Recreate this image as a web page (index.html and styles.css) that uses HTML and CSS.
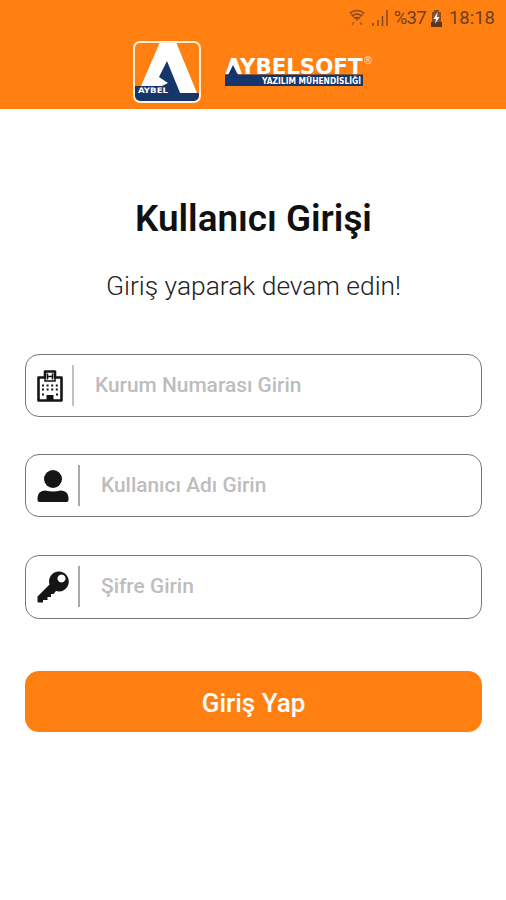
FILE: index.html
```html
<!DOCTYPE html>
<html lang="tr">
<head>
<meta charset="utf-8">
<title>Kullanıcı Girişi</title>
<link rel="stylesheet" href="styles.css">
</head>
<body>
<header class="header">
  <div class="status">
    <svg class="wifi" viewBox="0 0 16 18" width="16" height="18"><path d="M1 4Q8-1 15 4M3 7Q8 3 13 7M5.500 9.500Q8 7.500 10.500 9.500"/><path d="M1 4L8 11 15 4M8 9v3M5 13l-2 3M11 13l2 3" opacity=".6"/></svg>
    <svg class="signal" viewBox="0 0 18 18" width="18" height="18"><path d="M2 14v3M7 11v6M11.500 7v10M16 1v16"/></svg>
    <span class="percent">%37</span>
    <svg class="battery" viewBox="0 0 11 17" width="11" height="17"><path d="M3 0h5v2h2v15H1V2h2z" fill="#8b4c20"/><path d="M0 12h11v5H0z" fill="#57351f"/><path d="M6.500 2L2.500 9h2.700L4 14l4.500-7H6z" fill="#fff"/></svg>
    <span class="clock">18:18</span>
  </div>
  <div class="brand">
    <svg class="emblem" viewBox="0 0 70 64" width="70" height="64">
      <rect x="2" y="2" width="66" height="60" rx="6" fill="#ff7f11"/>
      <path d="M3 46H46V53H67v3q0 5-5 5H8q-5 0-5-5z" fill="#163568"/>
      <path d="M28 2H44L65 53H47L30 46H9z" fill="#fff"/>
      <path d="M35 21L27 37L36 43L30 46V54H48.500z" fill="#163568"/>
      <rect x="2" y="2" width="66" height="60" rx="6" fill="none" stroke="#fff1d8" stroke-width="2"/>
      <text x="6" y="52.800" textLength="30" lengthAdjust="spacingAndGlyphs" class="emblem-text">AYBEL</text>
    </svg>
    <svg class="wordmark" viewBox="0 0 150 36" width="150" height="36">
      <rect x="1" y="21.500" width="138" height="11.500" fill="#15366d"/>
      <text x="1.500" y="20.500" textLength="137" lengthAdjust="spacingAndGlyphs" class="wordmark-text">AYBELSOFT</text>
      <path d="M9 8l6 12H4z" fill="#fff"/><path d="M9 12l5 10H4z" fill="#15366d"/>
      <text x="38" y="31" textLength="99" lengthAdjust="spacingAndGlyphs" class="wordmark-sub">YAZILIM MÜHENDİSLİĞİ</text>
      <text x="139" y="11" class="registered">®</text>
    </svg>
  </div>
</header>
<main class="login">
  <h1 class="title">Kullanıcı Girişi</h1>
  <p class="subtitle">Giriş yaparak devam edin!</p>
  <form class="form">
    <label class="field field-org">
      <svg viewBox="0 0 26 32" width="26" height="32"><path d="M1.500 7.500H8V1.500H18V7.500H24.500V30.500H1.500z" fill="#fff" stroke="#151515" stroke-width="2.600" stroke-linejoin="round"/><path d="M10.500 3.500v6M15.500 3.500v6M10.500 6.500h5M8 7v4h10V7" fill="none" stroke="#151515" stroke-width="1.500"/><path d="M5 15.500h17M5 19.500h17M5 24.500h3M19 24.500h3" stroke="#151515" stroke-width="2" stroke-dasharray="2 2.600"/><path d="M9.500 31v-6h7v6z" fill="#151515"/></svg>
      <input type="text" placeholder="Kurum Numarası Girin">
    </label>
    <label class="field">
      <svg viewBox="0 0 32 32" width="32" height="32"><circle cx="16" cy="9" r="9" fill="#151515"/><path d="M.5 30v-1.500Q.5 20.500 8.500 20.500q7.500 2 15 0 8 0 8 8V30q0 2-2 2H2.500q-2 0-2-2z" fill="#151515"/></svg>
      <input type="text" placeholder="Kullanıcı Adı Girin">
    </label>
    <label class="field field-key">
      <svg viewBox="0 0 32 32" width="32" height="32"><path fill="#151515" fill-rule="evenodd" d="M22 .5a10 10 0 1 1-3 19.600L16.500 23H14v3h-3.500v3H6v2.500H1.500Q.5 31.500.5 30.500V25.500L12.500 13.500A10 10 0 0 1 22 .5zM24.500 3.500a4 4 0 1 0 .01 0z"/></svg>
      <input type="password" placeholder="Şifre Girin">
    </label>
    <button class="submit" type="button">Giriş Yap</button>
  </form>
</main>
</body>
</html>
```

FILE: styles.css
```css
* { box-sizing: border-box; }
body {
  margin: 0;
  min-height: 900px;
  background: #fff;
  font-family: Roboto, sans-serif;
  color: #101010;
}
svg { display: block; flex: none; }
.header {
  height: 109px;
  background: #ff7f11;
}
.status {
  display: flex;
  justify-content: flex-end;
  align-items: center;
  height: 40px;
  padding: 0 11px 4px 0;
  color: #70401c;
  font-size: 18.500px;
}
.wifi, .signal { fill: none; stroke: #84481a; stroke-width: 1.500; }
.signal { margin-left: 6px; }
.percent { margin-left: 5px; letter-spacing: -.7px; }
.battery { margin: 0 7px 0 5px; }
.brand {
  display: flex;
  padding-left: 132px;
}
.wordmark { margin: 13px 0 0 22px; }
.emblem-text { font: 700 7.500px "DejaVu Sans", sans-serif; fill: #fff; }
.wordmark-text { font: 700 20.500px "DejaVu Sans", sans-serif; fill: #fff; }
.wordmark-sub { font: 700 8px "DejaVu Sans", sans-serif; fill: #fff; }
.registered { font: 10px "DejaVu Sans", sans-serif; fill: #ffe0bd; }
.login { padding: 85px 24px 0 25px; }
.title {
  margin: 0;
  height: 48px;
  line-height: 49px;
  text-align: center;
  font-size: 36.800px;
  font-weight: 600;
}
.subtitle {
  margin: 28px 0 0;
  height: 32px;
  line-height: 32px;
  text-align: center;
  font-size: 26.400px;
  font-weight: 300;
  color: #222;
}
.form { display: flex; flex-direction: column; margin-top: 52px; }
.field {
  display: flex;
  align-items: center;
  height: 63px;
  margin-bottom: 37.400px;
  padding-left: 11px;
  border: 1px solid #777;
  border-radius: 14px;
}
.field input {
  flex: 1;
  min-width: 0;
  height: 41px;
  margin-left: 9px;
  padding: 0 0 2px 21px;
  border: 0;
  border-left: 2px solid #aaa;
  outline: 0;
  background: none;
  font: 500 20.900px Roboto, sans-serif;
}
.field-org input { border-left-color: #c2c2c2; }
.field input::placeholder { color: #bdbdbd; opacity: 1; }
.field-key { height: 64px; margin-bottom: 52.200px; }
.submit {
  height: 61px;
  padding: 4px 0 0;
  border: 0;
  border-radius: 14px;
  background: #ff7f11;
  color: #fff;
  font: 500 26px Roboto, sans-serif;
}
```
